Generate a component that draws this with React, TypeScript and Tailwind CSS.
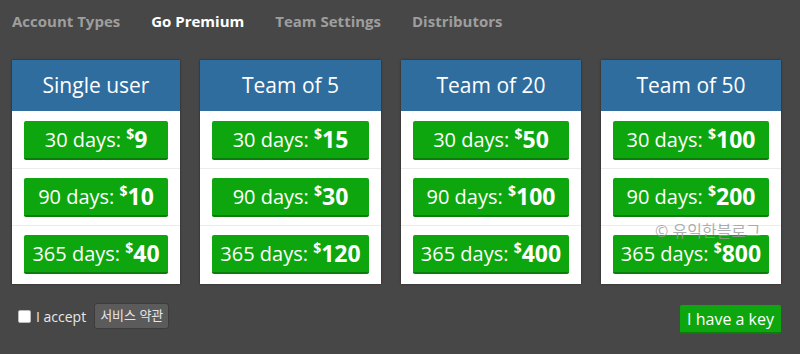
import React from "react";

interface Plan {
  title: string;
  width: string;
  prices: [string, string][];
}

const plans: Plan[] = [
  { title: "Single user", width: "w-[168px]", prices: [["30", "9"], ["90", "10"], ["365", "40"]] },
  { title: "Team of 5", width: "w-[181px]", prices: [["30", "15"], ["90", "30"], ["365", "120"]] },
  { title: "Team of 20", width: "w-[180px]", prices: [["30", "50"], ["90", "100"], ["365", "400"]] },
  { title: "Team of 50", width: "w-[180px]", prices: [["30", "100"], ["90", "200"], ["365", "800"]] },
];

const navItems = ["Account Types", "Go Premium", "Team Settings", "Distributors"];

// row paddings so buttons land where the original table cells put them
const rowPad = ["pt-[10px] pb-[8px]", "pt-[9px] pb-[8px] border-t border-[#ececec]", "pt-[9px] pb-[10px] border-t border-[#ececec]"];

const PriceButton: React.FC<{ days: string; price: string }> = ({ days, price }) => (
  <button className="w-full h-[39px] flex items-center justify-center rounded-[2px] bg-[#0ea60e] border-b-2 border-[#0a7d0a] text-white leading-none whitespace-nowrap">
    <span className="text-[20px]">{days} days:&nbsp;</span>
    <span className="text-[14px] font-bold self-start mt-[6px]">$</span>
    <span className="text-[23px] font-bold">{price}</span>
  </button>
);

const App: React.FC = () => {
  return (
    <div
      className="relative w-[800px] h-[354px] bg-[#474747] overflow-hidden"
      style={{ fontFamily: '"Open Sans", "Noto Sans CJK KR", sans-serif' }}
    >
      <nav className="flex gap-[31px] pl-[12px] pt-[10px] h-[60px]">
        {navItems.map((item) => (
          <span
            key={item}
            className={`text-[15px] font-bold leading-[22px] ${
              item === "Go Premium" ? "text-white" : "text-[#9e9e9e]"
            }`}
          >
            {item}
          </span>
        ))}
      </nav>

      <div className="flex gap-[20px] pl-[12px]">
        {plans.map((plan) => (
          <div key={plan.title} className={`${plan.width} bg-white shadow-[0_0_2px_rgba(0,0,0,0.5)]`}>
            <div className="h-[51px] bg-[#2f6d9f] flex items-center justify-center text-white text-[21px]">
              {plan.title}
            </div>
            {plan.prices.map(([days, price], i) => (
              <div key={days} className={`px-[12px] ${rowPad[i]}`}>
                <PriceButton days={days} price={price} />
              </div>
            ))}
          </div>
        ))}
      </div>

      <div className="flex items-start justify-between pl-[18px] pr-[19px] mt-[19px]">
        <div className="flex items-center h-[26px]">
          <span className="w-[13px] h-[13px] bg-white rounded-[2px] border border-[#bbb]" />
          <span className="ml-[5px] text-[14px] text-[#e8e8e8]">I accept</span>
          <button className="ml-[8px] h-[26px] px-[5px] rounded-[3px] bg-[#5b5b5b] border border-[#3c3c3c] text-[13px] text-[#e6e6e6]">
            서비스 약관
          </button>
        </div>
        <button className="mt-[2px] h-[29px] px-[7px] rounded-[2px] bg-[#0ea60e] border-b-2 border-[#0a7d0a] text-white text-[16px]">
          I have a key
        </button>
      </div>

      <span className="absolute left-[655px] top-[219px] text-[16px] text-[#9a9a9a]/80 pointer-events-none">
        © 유익한블로그
      </span>
    </div>
  );
};

export default App;
